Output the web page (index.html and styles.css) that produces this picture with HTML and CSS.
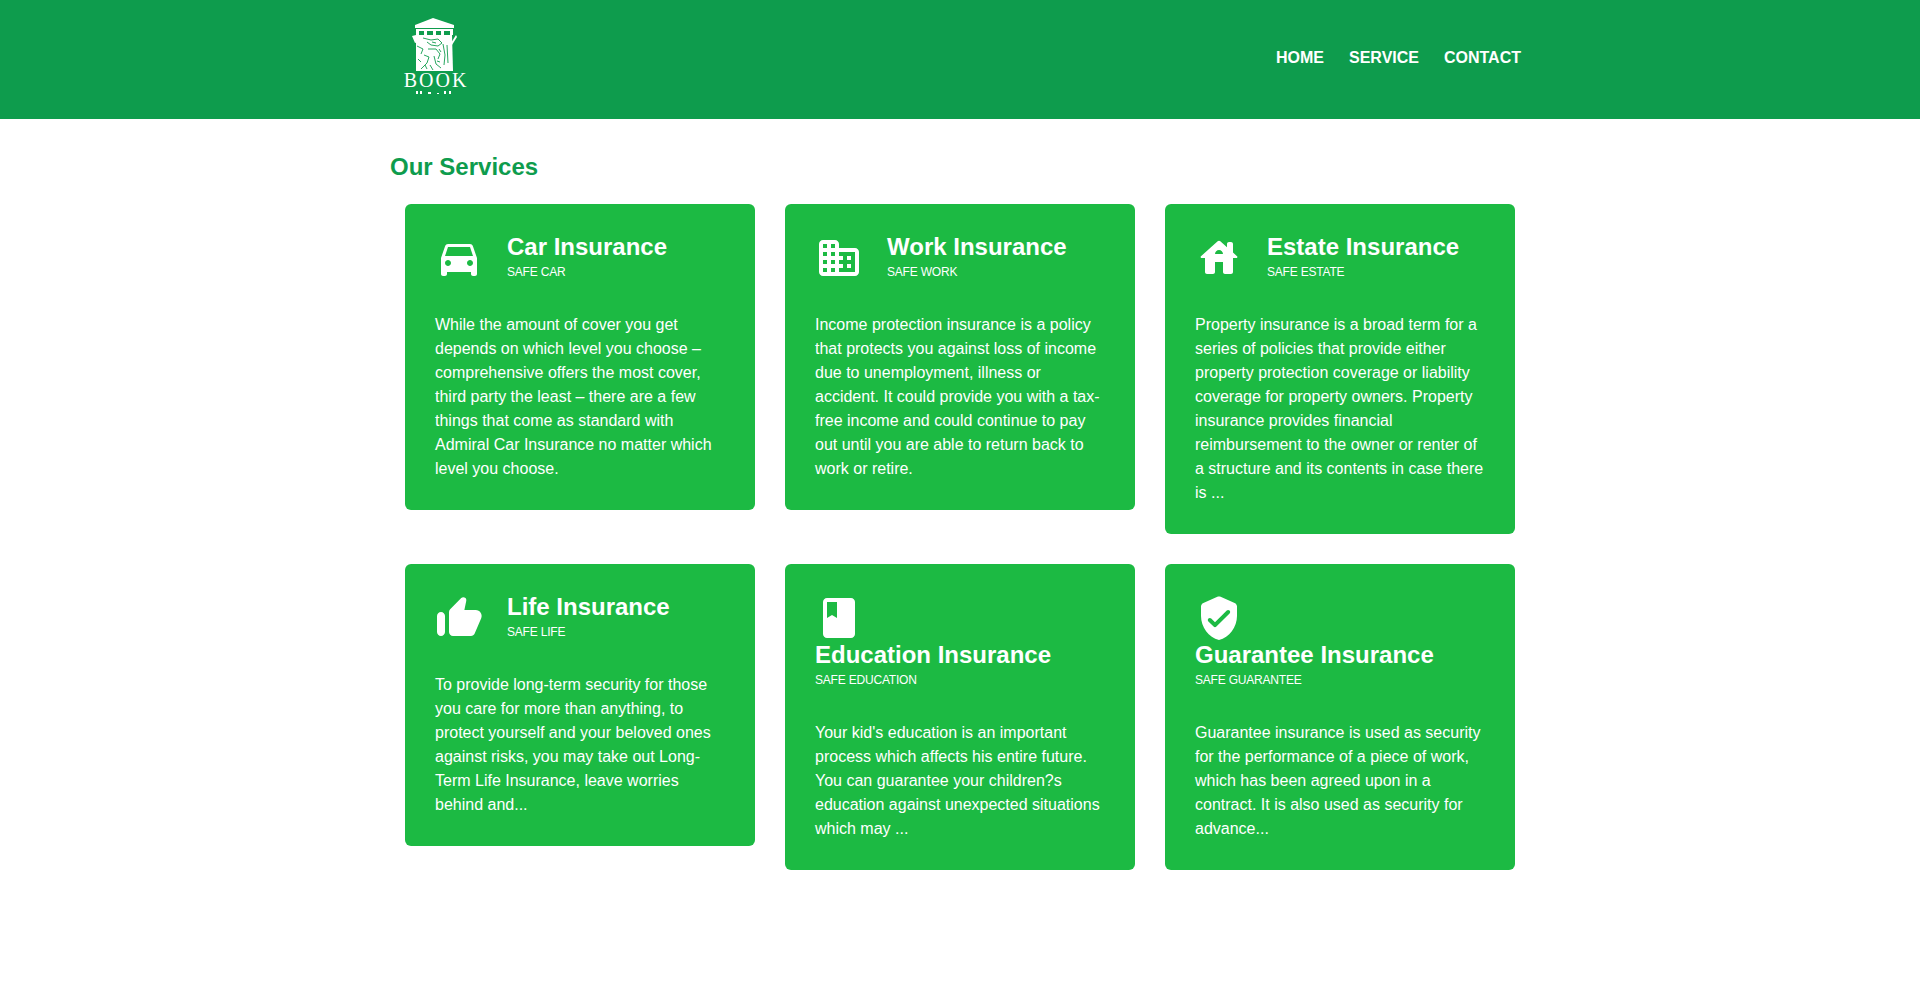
FILE: index.html
```html
<!DOCTYPE html>
<html lang="en">
<head>
  <meta charset="UTF-8">
  <meta name="viewport" content="width=device-width, initial-scale=1.0">
  <title>Book - Our Services</title>
  <link rel="stylesheet" href="styles.css">
</head>
<body>
  <header class="site-header">
    <div class="header-inner">
      <a class="logo" href="#" aria-label="Book">
        <svg class="logo-mark" viewBox="0 0 65 80" width="65" height="80">
          <path class="logo-fill" d="M30 0 12 7H51Z"/>
          <rect class="logo-fill" x="12" y="7" width="39" height="3"/>
          <path class="logo-fill" d="M13 11H50V17H47V13H41V17H38V13H33V17H30V13H24V17H21V13H16V17H13Z"/>
          <path class="logo-fill" d="M13 17H49L50 53H13Z"/>
          <path class="logo-fill" d="M9 18 13 17 15 24 12 25ZM53 17 54 19 49 27 48 25Z"/>
          <path class="logo-cut" d="M20 20 28 22 35 21 39 25 35 28 28 27 24 24M25 31 33 31 37 36 35 41M21 37 26 39 24 45 18 51M31 38 33 46 38 50M40 26 42 37 41 47M44 27 45 45M15 41 18 44M27 47 30 52M14 28 20 31 18 36M29 24 33 25M36 31 38 34M22 47 24 51M34 43 37 44"/>
          <text class="logo-word" x="33" y="69" text-anchor="middle">BOOK</text>
          <path class="logo-fill" d="M13 73H15V76H13ZM17 73H19V76H17ZM25 74H28V76H25ZM34 75H36V76H34ZM41 73H43V76H41ZM46 73H48V76H46Z"/>
        </svg>
      </a>
      <nav class="main-nav">
        <a href="#">HOME</a>
        <a href="#">SERVICE</a>
        <a href="#">CONTACT</a>
      </nav>
    </div>
  </header>

  <main class="content">
    <h2 class="section-title">Our Services</h2>
    <div class="card-list">

      <article class="card">
        <div class="card-head">
          <svg class="card-icon" viewBox="0 0 24 24"><path d="M18.92 6.01C18.72 5.42 18.16 5 17.5 5h-11c-.66 0-1.21.42-1.42 1.01L3 12v8c0 .55.45 1 1 1h1c.55 0 1-.45 1-1v-1h12v1c0 .55.45 1 1 1h1c.55 0 1-.45 1-1v-8l-2.08-5.99zM6.5 16c-.83 0-1.5-.67-1.5-1.5S5.67 13 6.5 13s1.5.67 1.5 1.5S7.33 16 6.5 16zm11 0c-.83 0-1.5-.67-1.5-1.5s.67-1.5 1.5-1.5 1.5.67 1.5 1.5-.67 1.5-1.5 1.5zM5 11l1.5-4.5h11L19 11H5z"/></svg>
          <div class="card-heading">
            <h3>Car Insurance</h3>
            <small>SAFE CAR</small>
          </div>
        </div>
        <p>While the amount of cover you get depends on which level you choose – comprehensive offers the most cover, third party the least – there are a few things that come as standard with Admiral Car Insurance no matter which level you choose.</p>
      </article>

      <article class="card">
        <div class="card-head">
          <svg class="card-icon" viewBox="0 0 24 24"><path fill-rule="evenodd" d="M12 7V5c0-1.1-.9-2-2-2H4c-1.1 0-2 .9-2 2v14c0 1.1.9 2 2 2h16c1.1 0 2-.9 2-2V9c0-1.1-.9-2-2-2h-8zM6 19H4v-2h2v2zm0-4H4v-2h2v2zm0-4H4V9h2v2zm0-4H4V5h2v2zm4 12H8v-2h2v2zm0-4H8v-2h2v2zm0-4H8V9h2v2zm0-4H8V5h2v2zm10 12h-8v-2h2v-2h-2v-2h2v-2h-2V9h8v10zm-2-8h-2v2h2v-2zm0 4h-2v2h2v-2z"/></svg>
          <div class="card-heading">
            <h3>Work Insurance</h3>
            <small>SAFE WORK</small>
          </div>
        </div>
        <p>Income protection insurance is a policy that protects you against loss of income due to unemployment, illness or accident. It could provide you with a tax-free income and could continue to pay out until you are able to return back to work or retire.</p>
      </article>

      <article class="card">
        <div class="card-head">
          <svg class="card-icon" viewBox="0 0 24 24"><path d="M19 9.3V5c0-.55-.45-1-1-1h-1c-.55 0-1 .45-1 1v1.6l-3.33-3c-.38-.34-.96-.34-1.34 0l-8.36 7.53c-.3.27-.11.87.33.87H5v7c0 .55.45 1 1 1h3c.55 0 1-.45 1-1v-5h4v5c0 .55.45 1 1 1h3c.55 0 1-.45 1-1v-7h1.7c.46 0 .68-.57.33-.87L19 9.3zm-9 .7c0-1.1.9-2 2-2s2 .9 2 2h-4z"/></svg>
          <div class="card-heading">
            <h3>Estate Insurance</h3>
            <small>SAFE ESTATE</small>
          </div>
        </div>
        <p>Property insurance is a broad term for a series of policies that provide either property protection coverage or liability coverage for property owners. Property insurance provides financial reimbursement to the owner or renter of a structure and its contents in case there is ...</p>
      </article>

      <article class="card">
        <div class="card-head">
          <svg class="card-icon" viewBox="0 0 24 24"><path d="M13.12 2.06 7.58 7.6c-.37.37-.58.88-.58 1.41V19c0 1.1.9 2 2 2h9c.8 0 1.52-.48 1.84-1.21l3.26-7.61C23.94 10.2 22.49 8 20.34 8h-5.65l.95-4.58c.1-.5-.05-1.01-.41-1.37-.59-.58-1.53-.58-2.11.01zM3 21c1.1 0 2-.9 2-2v-8c0-1.1-.9-2-2-2s-2 .9-2 2v8c0 1.1.9 2 2 2z"/></svg>
          <div class="card-heading">
            <h3>Life Insurance</h3>
            <small>SAFE LIFE</small>
          </div>
        </div>
        <p>To provide long-term security for those you care for more than anything, to protect yourself and your beloved ones against risks, you may take out Long-Term Life Insurance, leave worries behind and...</p>
      </article>

      <article class="card">
        <div class="card-head">
          <svg class="card-icon" viewBox="0 0 24 24"><path d="M18 2H6c-1.1 0-2 .9-2 2v16c0 1.1.9 2 2 2h12c1.1 0 2-.9 2-2V4c0-1.1-.9-2-2-2zM6 4h5v8l-2.5-1.5L6 12V4z"/></svg>
          <div class="card-heading">
            <h3>Education Insurance</h3>
            <small>SAFE EDUCATION</small>
          </div>
        </div>
        <p>Your kid's education is an important process which affects his entire future. You can guarantee your children?s education against unexpected situations which may ...</p>
      </article>

      <article class="card">
        <div class="card-head">
          <svg class="card-icon" viewBox="0 0 24 24"><path d="M11.19 1.36l-7 3.11C3.47 4.79 3 5.51 3 6.3V11c0 5.55 3.84 10.74 9 12 5.16-1.26 9-6.45 9-12V6.3c0-.79-.47-1.51-1.19-1.83l-7-3.11c-.51-.23-1.11-.23-1.62 0zM9.29 16.29 6.7 13.7c-.39-.39-.39-1.02 0-1.41.39-.39 1.02-.39 1.41 0L10 14.17l5.88-5.88c.39-.39 1.02-.39 1.41 0 .39.39.39 1.02 0 1.41l-6.59 6.59c-.38.39-1.02.39-1.41 0z"/></svg>
          <div class="card-heading">
            <h3>Guarantee Insurance</h3>
            <small>SAFE GUARANTEE</small>
          </div>
        </div>
        <p>Guarantee insurance is used as security for the performance of a piece of work, which has been agreed upon in a contract. It is also used as security for advance...</p>
      </article>

    </div>
  </main>
</body>
</html>
```

FILE: styles.css
```css
body {
  margin: 0;
  padding: 0;
  background-color: #fff;
  color: #fff;
  font-family: "Liberation Sans", Arial, sans-serif;
  font-size: 16px;
  line-height: 24px;
}

.site-header {
  background-color: #0e9c4d;
}

.header-inner {
  width: 1140px;
  margin: 0 auto;
  padding: 18px 9px 21px 13px;
  box-sizing: border-box;
  display: flex;
  justify-content: space-between;
  align-items: center;
}

.logo {
  display: block;
  height: 80px;
}

.logo-mark {
  display: block;
}

.logo-fill {
  fill: #fff;
}

.logo-cut {
  fill: none;
  stroke: #0e9c4d;
  stroke-width: 0.9;
}

.logo-word {
  fill: #fff;
  font-family: "Liberation Serif", serif;
  font-size: 20px;
  letter-spacing: 2px;
}

.main-nav {
  display: flex;
  gap: 25px;
}

.main-nav a {
  color: #fff;
  font-weight: bold;
  text-decoration: none;
}

.content {
  width: 1140px;
  margin: 0 auto;
}

.section-title {
  margin: 0;
  padding: 33px 0 22px;
  color: #0e9c4d;
  font-size: 24px;
  line-height: 30px;
}

.card-list {
  display: flex;
  flex-wrap: wrap;
  align-items: flex-start;
  gap: 30px;
  padding: 0 15px;
}

.card {
  width: 350px;
  padding: 30px 30px 29px;
  box-sizing: border-box;
  background-color: #1cba43;
  border-radius: 6px;
}

.card-head {
  display: flex;
  flex-wrap: wrap;
  column-gap: 24px;
  margin-bottom: 31px;
}

.card-icon {
  width: 48px;
  height: 48px;
  fill: #fff;
}

.card-heading h3 {
  margin: 0 0 3px;
  font-size: 24px;
  line-height: 26px;
}

.card-heading small {
  display: block;
  font-size: 12px;
  letter-spacing: -0.2px;
  line-height: 18px;
  margin-bottom: 1px;
}

.card p {
  margin: 0;
}
```
